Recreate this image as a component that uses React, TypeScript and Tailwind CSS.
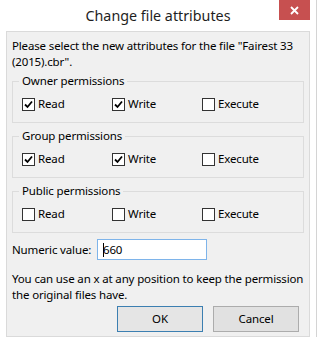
const font = "font-['Segoe_UI','Noto_Sans',sans-serif]";

type Perm = { read: boolean; write: boolean; execute: boolean };

function Checkbox({ checked, label }: { checked: boolean; label: string }) {
  return (
    <div className="flex w-[90px] items-center">
      <span className="flex h-[13px] w-[13px] items-center justify-center border border-[#333333] bg-white">
        {checked && (
          <svg width="9" height="9" viewBox="0 0 9 9">
            <path d="M1 4.5 L3.5 7 L8 1.5" fill="none" stroke="#000" strokeWidth="1.8" />
          </svg>
        )}
      </span>
      <span className="ml-[3px] leading-[16px]">{label}</span>
    </div>
  );
}

function GroupBox({ title, perm }: { title: string; perm: Perm }) {
  return (
    <div className="relative h-[42px] w-[292px] border border-[#dcdcdc]">
      <span className="absolute left-[6px] top-[-9px] bg-[#f0f0f0] px-[3px] leading-[16px]">{title}</span>
      <div className="flex pl-[9px] pt-[14px]">
        <Checkbox checked={perm.read} label="Read" />
        <Checkbox checked={perm.write} label="Write" />
        <Checkbox checked={perm.execute} label="Execute" />
      </div>
    </div>
  );
}

export default function App() {
  return (
    <div className={`h-[343px] w-[319px] bg-white text-[11.5px] tracking-[-0.15px] text-black ${font}`}>
      <div className="flex h-[337px] w-[317px] flex-col border-r border-[#d4d4d4]">
        <div className="relative flex h-[31px] items-center justify-center">
          <span className="pt-[1px] text-[14.3px] tracking-normal text-[#1e1e1e]">Change file attributes</span>
          <span className="absolute right-[6px] top-0 flex h-[20px] w-[31px] items-center justify-center bg-[#c75050]">
            <svg width="9" height="9" viewBox="0 0 9 9">
              <path d="M1 1 L8 8 M8 1 L1 8" stroke="#fff" strokeWidth="1.8" />
            </svg>
          </span>
        </div>
        <div className="ml-[6px] flex w-[304px] flex-1 flex-col border border-[#dadada] bg-[#f0f0f0] pl-[5px] pt-[6px]">
          <p className="w-[290px] leading-[16px]">
            Please select the new attributes for the file "Fairest 33 (2015).cbr".
          </p>
          <div className="mt-[11px] flex flex-col gap-[13px]">
            <GroupBox title="Owner permissions" perm={{ read: true, write: true, execute: false }} />
            <GroupBox title="Group permissions" perm={{ read: true, write: true, execute: false }} />
            <GroupBox title="Public permissions" perm={{ read: false, write: false, execute: false }} />
          </div>
          <div className="mt-[6px] flex items-center">
            <span className="w-[85px] leading-[16px]">Numeric value:</span>
            <div className="flex h-[21px] w-[110px] items-center border border-[#7eb4ea] bg-white pl-[5px]">
              <span className="-mr-[1px] h-[14px] w-px bg-black" />
              <span>660</span>
            </div>
          </div>
          <p className="mt-[11px] w-[292px] leading-[16px]">
            You can use an x at any position to keep the permission the original files have.
          </p>
          <div className="mt-[3px] flex justify-end gap-[10px] pr-[10px]">
            <button className="h-[26px] w-[86px] border border-[#3c7fb1] bg-[#e5e5e5]">OK</button>
            <button className="h-[26px] w-[86px] border border-[#acacac] bg-[#e1e1e1]">Cancel</button>
          </div>
        </div>
      </div>
    </div>
  );
}
